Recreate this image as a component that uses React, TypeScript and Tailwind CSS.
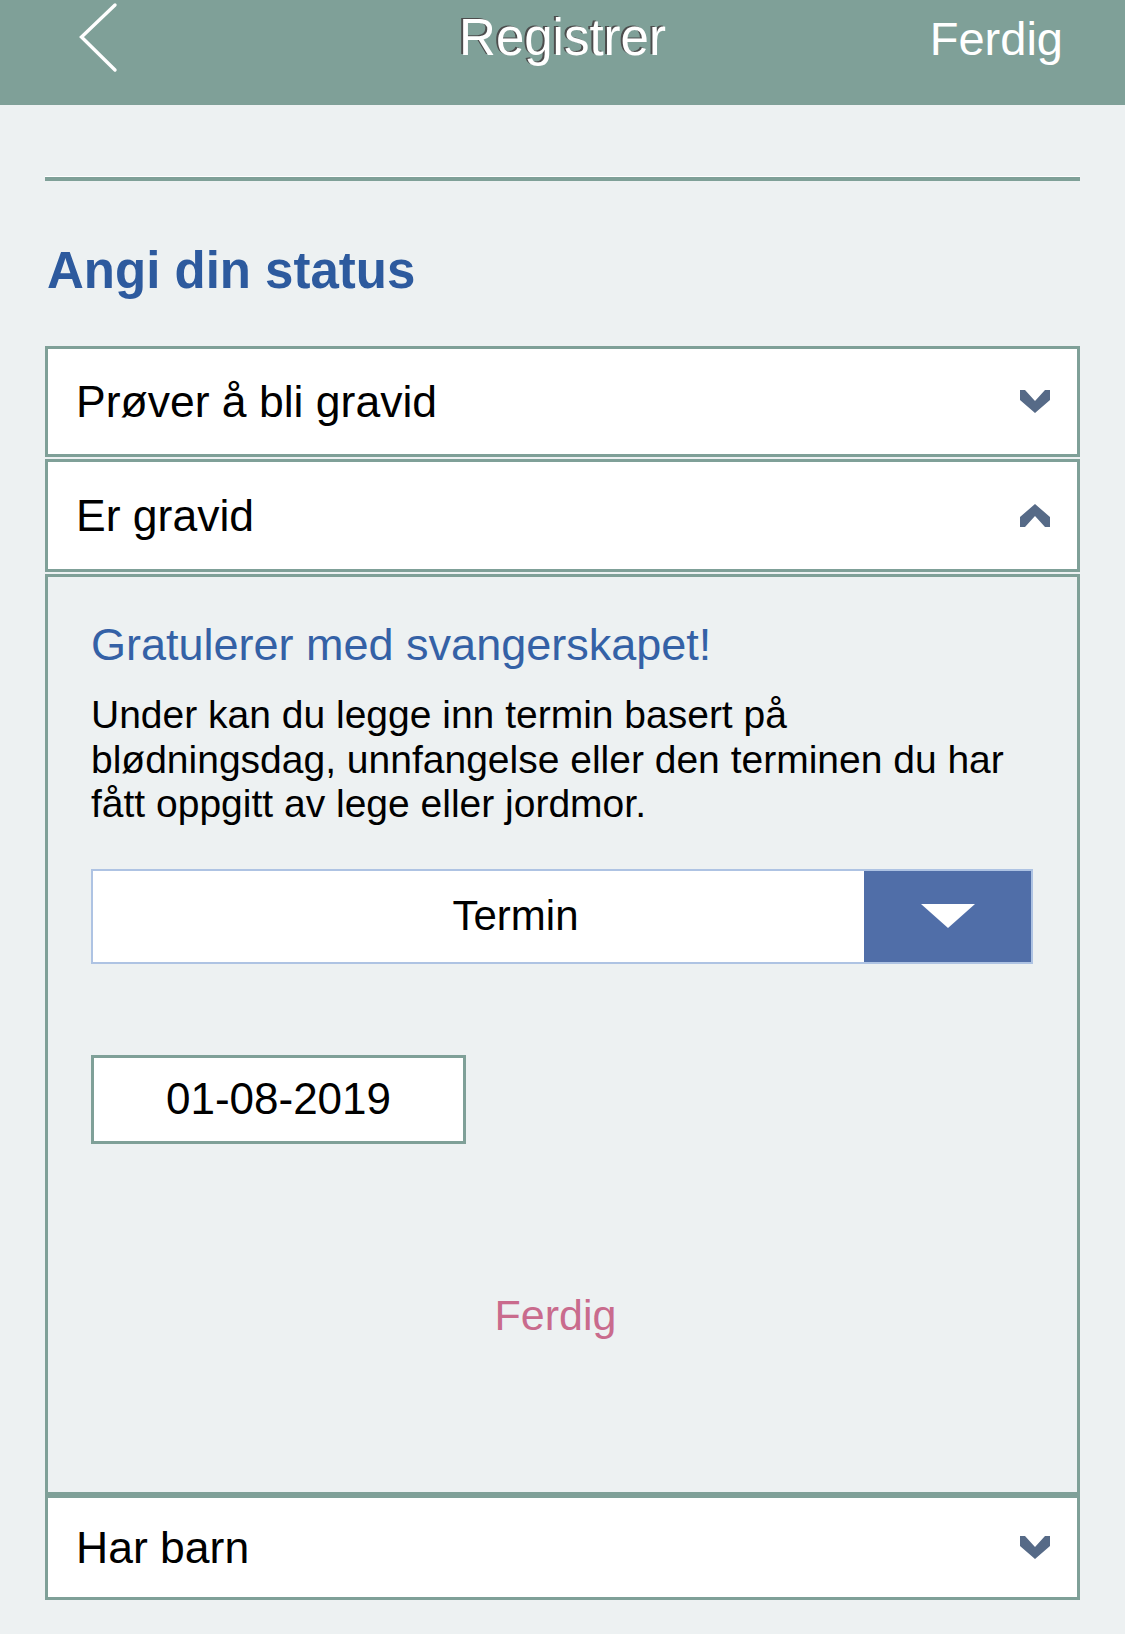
import React from "react";

const GREEN = "#7fa098";

function Chevron({ up = false }: { up?: boolean }) {
  return (
    <svg width="30" height="25" viewBox="0 0 30 25" aria-hidden="true">
      <polygon
        fill="#566a87"
        points={
          up
            ? "0,24 5,24 15,13 25,24 30,24 30,14 15,1 0,14"
            : "0,1 5,1 15,12 25,1 30,1 30,11 15,24 0,11"
        }
      />
    </svg>
  );
}

function StatusRow({
  label,
  open = false,
  height,
}: {
  label: string;
  open?: boolean;
  height: string;
}) {
  return (
    <div
      className={`${height} box-border border-[3px] border-[#7fa098] bg-white flex items-center justify-between pl-[28px] pr-[27px]`}
    >
      <span className="text-[44.5px] leading-[50px] text-black">{label}</span>
      <Chevron up={open} />
    </div>
  );
}

export default function App() {
  return (
    <div className="w-[1125px] h-[1634px] overflow-hidden bg-[#edf1f2] font-['Liberation_Sans',Arial,sans-serif]">
      {/* nav bar */}
      <header className="h-[105px] bg-[#7fa098] flex items-start">
        <div className="w-[300px] pl-[78px] pt-[2px]">
          <svg width="42" height="72" viewBox="0 0 42 72" aria-hidden="true">
            <polyline
              points="37,3 3.5,35 37,68"
              fill="none"
              stroke="#fff"
              strokeWidth="3.4"
              strokeLinecap="round"
              strokeLinejoin="miter"
            />
          </svg>
        </div>
        <h1 className="flex-1 text-center pt-[8px] text-[51px] leading-[60px] text-white [text-shadow:-2px_-1px_0_#4d4d4d]">
          Registrer
        </h1>
        <div className="w-[300px] text-right pr-[62px] pt-[9px] text-[47px] leading-[60px] text-white">
          Ferdig
        </div>
      </header>

      <main className="px-[45px]">
        <div className="mt-[72px] h-[4px] bg-[#7fa098] shadow-[0_-1px_0_#ffffff]" />

        <h2 className="mt-[60px] ml-[2px] text-[51px] leading-[60px] font-bold text-[#2d5a9e]">
          Angi din status
        </h2>

        <div className="mt-[45px] flex flex-col">
          <StatusRow label="Prøver å bli gravid" height="h-[111px]" />
          <div className="h-[2px]" />
          <StatusRow label="Er gravid" open height="h-[113px]" />
          <div className="h-[2px]" />

          {/* expanded panel */}
          <section
            className="h-[921px] box-border border-[3px] border-[#7fa098] pt-[42px] pl-[43px] pr-[44px]"
            style={{ borderColor: GREEN }}
          >
            <h3 className="text-[45px] leading-[52px] text-[#3461a6]">
              Gratulerer med svangerskapet!
            </h3>
            <p className="mt-[22px] text-[39px] leading-[44.5px] text-black">
              Under kan du legge inn termin basert på
              <br />
              blødningsdag, unnfangelse eller den terminen du har
              <br />
              fått oppgitt av lege eller jordmor.
            </p>

            <div className="mt-[42px] h-[95px] box-border border-2 border-[#aec3e3] flex bg-white">
              <div className="flex-1 flex items-center justify-center pl-[74px] text-[42px] leading-[50px] text-black">
                Termin
              </div>
              <div className="w-[167px] bg-[#506ea8] flex items-center justify-center">
                <svg width="54" height="24" viewBox="0 0 54 24" aria-hidden="true">
                  <polygon points="0,0 54,0 27,24" fill="#fff" />
                </svg>
              </div>
            </div>

            <div className="mt-[91px] w-[375px] h-[89px] box-border border-[3px] border-[#7fa098] bg-white flex items-center justify-center text-[44px] leading-[50px] text-black">
              01-08-2019
            </div>

            <div className="mt-[146px] pr-[13px] text-center text-[43px] leading-[50px] text-[#c96b8d]">
              Ferdig
            </div>
          </section>

          <StatusRow label="Har barn" height="h-[105px]" />
        </div>
      </main>
    </div>
  );
}
